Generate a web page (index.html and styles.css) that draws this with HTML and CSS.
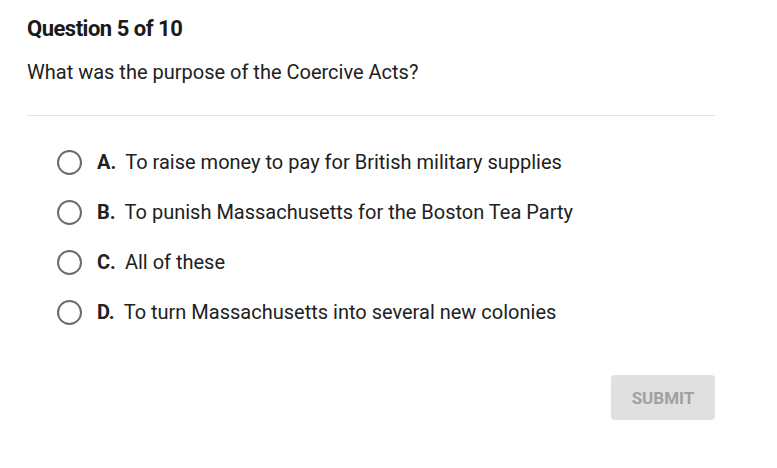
FILE: index.html
```html
<!DOCTYPE html>
<html lang="en">
<head>
  <meta charset="UTF-8">
  <meta name="viewport" content="width=device-width, initial-scale=1.0">
  <title>Question 5 of 10</title>
  <link rel="stylesheet" href="styles.css">
</head>
<body>
  <div class="quiz">
    <p class="title">Question 5 of 10</p>
    <p class="question">What was the purpose of the Coercive Acts?</p>
    <hr class="divider">

    <ul class="options">
      <li class="option"><span class="radio"></span><b>A.</b><span>To raise money to pay for British military supplies</span></li>
      <li class="option"><span class="radio"></span><b>B.</b><span>To punish Massachusetts for the Boston Tea Party</span></li>
      <li class="option"><span class="radio"></span><b>C.</b><span>All of these</span></li>
      <li class="option"><span class="radio"></span><b>D.</b><span>To turn Massachusetts into several new colonies</span></li>
    </ul>

    <div class="actions">
      <button class="submit" disabled>SUBMIT</button>
    </div>
  </div>
</body>
</html>
```

FILE: styles.css
```css
body {
  margin: 0;
  background-color: #ffffff;
  font-family: Roboto, "Liberation Sans", sans-serif;
  color: #212121;
}
.quiz {
  width: 688px;
  padding: 16px 0 0 27px;
}
.title {
  margin: 0;
  font-size: 22px;
  font-weight: bold;
  letter-spacing: -0.5px;
  color: #1a1a1a;
}
.question {
  margin: 19px 0 0;
  font-size: 20px;
}
.divider {
  margin: 31px 0 0;
  border: none;
  border-top: 1px solid #e3e3e3;
}
.options {
  list-style: none;
  margin: 0;
  padding: 21px 0 0 30px;
}
.option {
  display: flex;
  align-items: center;
  height: 50px;
  font-size: 20px;
}
.option b {
  margin-right: 9px;
}
.radio {
  width: 21px;
  height: 21px;
  border: 2px solid #6b6b6b;
  border-radius: 50%;
  margin-right: 15px;
}
.actions {
  display: flex;
  justify-content: flex-end;
  margin-top: 38px;
}
.submit {
  width: 104px;
  height: 45px;
  border: none;
  border-radius: 4px;
  background-color: #e0e0e0;
  color: #a0a0a0;
  font-family: Roboto, "Liberation Sans", sans-serif;
  font-size: 17px;
  font-weight: bold;
}
```
